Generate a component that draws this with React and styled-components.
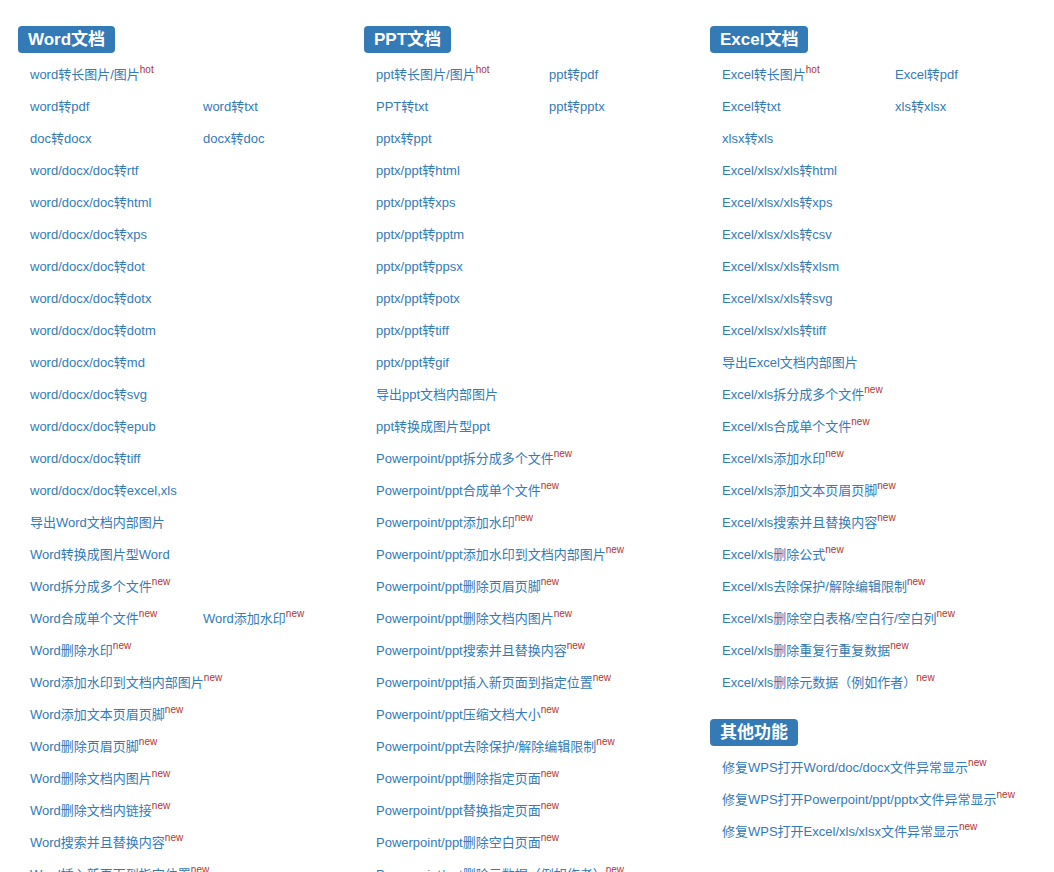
import React from "react";
import styled, { createGlobalStyle } from "styled-components";

const GlobalStyle = createGlobalStyle`
  html, body {
    margin: 0;
    padding: 0;
    background: #fff;
  }
  body {
    font-family: "Liberation Sans", Arial, "Noto Sans CJK SC", sans-serif;
    font-size: 13px;
    color: #333;
  }
`;

const word = [
  [["word转长图片/图片", "hot"]],
  [["word转pdf"], ["word转txt"]],
  [["doc转docx"], ["docx转doc"]],
  [["word/docx/doc转rtf"]],
  [["word/docx/doc转html"]],
  [["word/docx/doc转xps"]],
  [["word/docx/doc转dot"]],
  [["word/docx/doc转dotx"]],
  [["word/docx/doc转dotm"]],
  [["word/docx/doc转md"]],
  [["word/docx/doc转svg"]],
  [["word/docx/doc转epub"]],
  [["word/docx/doc转tiff"]],
  [["word/docx/doc转excel,xls"]],
  [["导出Word文档内部图片"]],
  [["Word转换成图片型Word"]],
  [["Word拆分成多个文件", "new"]],
  [["Word合成单个文件", "new"], ["Word添加水印", "new"]],
  [["Word删除水印", "new"]],
  [["Word添加水印到文档内部图片", "new"]],
  [["Word添加文本页眉页脚", "new"]],
  [["Word删除页眉页脚", "new"]],
  [["Word删除文档内图片", "new"]],
  [["Word删除文档内链接", "new"]],
  [["Word搜索并且替换内容", "new"]],
  [["Word插入新页面到指定位置", "new"]],
];

const ppt = [
  [["ppt转长图片/图片", "hot"], ["ppt转pdf"]],
  [["PPT转txt"], ["ppt转pptx"]],
  [["pptx转ppt"]],
  [["pptx/ppt转html"]],
  [["pptx/ppt转xps"]],
  [["pptx/ppt转pptm"]],
  [["pptx/ppt转ppsx"]],
  [["pptx/ppt转potx"]],
  [["pptx/ppt转tiff"]],
  [["pptx/ppt转gif"]],
  [["导出ppt文档内部图片"]],
  [["ppt转换成图片型ppt"]],
  [["Powerpoint/ppt拆分成多个文件", "new"]],
  [["Powerpoint/ppt合成单个文件", "new"]],
  [["Powerpoint/ppt添加水印", "new"]],
  [["Powerpoint/ppt添加水印到文档内部图片", "new"]],
  [["Powerpoint/ppt删除页眉页脚", "new"]],
  [["Powerpoint/ppt删除文档内图片", "new"]],
  [["Powerpoint/ppt搜索并且替换内容", "new"]],
  [["Powerpoint/ppt插入新页面到指定位置", "new"]],
  [["Powerpoint/ppt压缩文档大小", "new"]],
  [["Powerpoint/ppt去除保护/解除编辑限制", "new"]],
  [["Powerpoint/ppt删除指定页面", "new"]],
  [["Powerpoint/ppt替换指定页面", "new"]],
  [["Powerpoint/ppt删除空白页面", "new"]],
  [["Powerpoint/ppt删除元数据（例如作者）", "new"]],
];

const excel = [
  [["Excel转长图片", "hot"], ["Excel转pdf"]],
  [["Excel转txt"], ["xls转xlsx"]],
  [["xlsx转xls"]],
  [["Excel/xlsx/xls转html"]],
  [["Excel/xlsx/xls转xps"]],
  [["Excel/xlsx/xls转csv"]],
  [["Excel/xlsx/xls转xlsm"]],
  [["Excel/xlsx/xls转svg"]],
  [["Excel/xlsx/xls转tiff"]],
  [["导出Excel文档内部图片"]],
  [["Excel/xls拆分成多个文件", "new"]],
  [["Excel/xls合成单个文件", "new"]],
  [["Excel/xls添加水印", "new"]],
  [["Excel/xls添加文本页眉页脚", "new"]],
  [["Excel/xls搜索并且替换内容", "new"]],
  [["Excel/xls删除公式", "new"]],
  [["Excel/xls去除保护/解除编辑限制", "new"]],
  [["Excel/xls删除空白表格/空白行/空白列", "new"]],
  [["Excel/xls删除重复行重复数据", "new"]],
  [["Excel/xls删除元数据（例如作者）", "new"]],
];

const other = [
  [["修复WPS打开Word/doc/docx文件异常显示", "new"]],
  [["修复WPS打开Powerpoint/ppt/pptx文件异常显示", "new"]],
  [["修复WPS打开Excel/xls/xlsx文件异常显示", "new"]],
];

function Section({ title, rows }) {
  return (
    <Block>
      <Label>{title}</Label>
      <List>
        {rows.map((row, i) => (
          <Row key={i}>
            {row.map(([text, tag]) => (
              <Item key={text}>
                <Link href="#" onClick={(e) => e.preventDefault()}>
                  {text}
                </Link>
                {tag && <Tag>{tag}</Tag>}
              </Item>
            ))}
          </Row>
        ))}
      </List>
    </Block>
  );
}

export default function App() {
  return (
    <>
      <GlobalStyle />
      <Page>
        <Column>
          <Section title="Word文档" rows={word} />
        </Column>
        <Column>
          <Section title="PPT文档" rows={ppt} />
        </Column>
        <Column>
          <Section title="Excel文档" rows={excel} />
          <Section title="其他功能" rows={other} />
        </Column>
      </Page>
    </>
  );
}

const Page = styled.div`
  display: grid;
  grid-template-columns: repeat(3, 346px);
  padding: 5px 0 0 18px;
  height: 872px;
  overflow: hidden;
  box-sizing: border-box;
`;

const Column = styled.div`
  display: flex;
  flex-direction: column;
`;

const Block = styled.section`
  padding-top: 21px;
  & + & {
    padding-top: 20px;
  }
`;

const Label = styled.h4`
  display: inline-block;
  margin: 0 0 6px;
  padding: 4px 10px 4px;
  background: #337ab7;
  color: #fff;
  font-size: 17px;
  line-height: 19px;
  font-weight: bold;
  border-radius: 4px;
`;

const List = styled.ul`
  list-style: none;
  margin: 0;
  padding: 0 0 0 12px;
`;

const Row = styled.li`
  display: flex;
  height: 32px;
  align-items: center;
  white-space: nowrap;
`;

const Item = styled.span`
  width: 173px;
  flex: 0 0 173px;
  line-height: 20px;
`;

const Link = styled.a`
  color: #337ab7;
  text-decoration: none;
  font-size: 13px;
`;

const Tag = styled.sup`
  color: #b5322f;
  font-size: 10px;
  line-height: 0;
  position: relative;
  top: -1px;
  vertical-align: super;
`;
